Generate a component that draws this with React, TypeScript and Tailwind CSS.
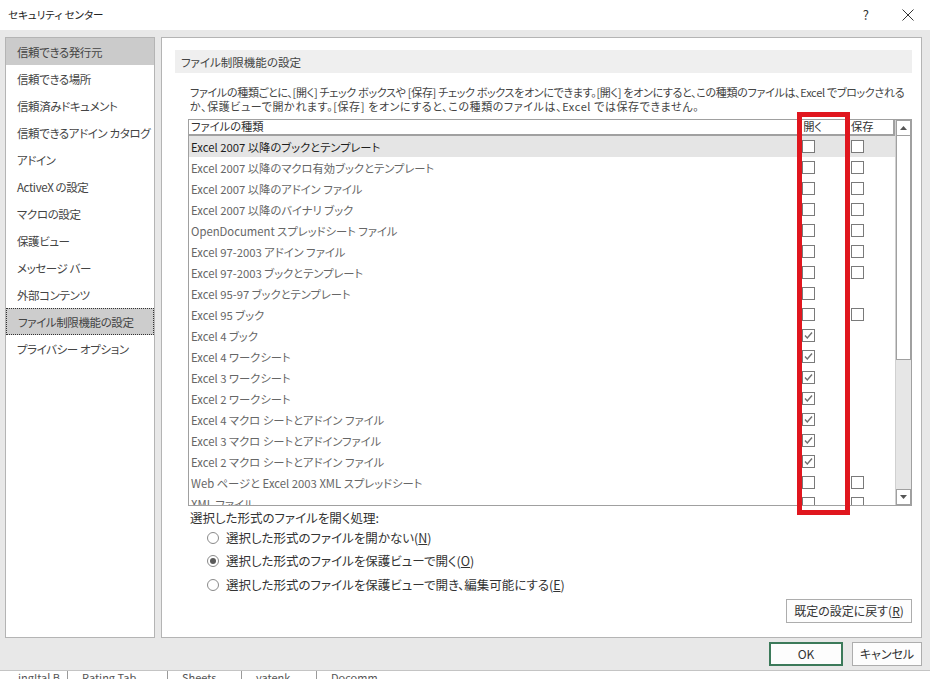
import React from 'react';

const navItems = [
  '信頼できる発行元',
  '信頼できる場所',
  '信頼済みドキュメント',
  '信頼できるアドイン カタログ',
  'アドイン',
  'ActiveX の設定',
  'マクロの設定',
  '保護ビュー',
  'メッセージ バー',
  '外部コンテンツ',
  'ファイル制限機能の設定',
  'プライバシー オプション',
];

type Row = { name: string; open: boolean; save: boolean | null };

const rows: Row[] = [
  { name: 'Excel 2007 以降のブックとテンプレート', open: false, save: false },
  { name: 'Excel 2007 以降のマクロ有効ブックとテンプレート', open: false, save: false },
  { name: 'Excel 2007 以降のアドイン ファイル', open: false, save: false },
  { name: 'Excel 2007 以降のバイナリ ブック', open: false, save: false },
  { name: 'OpenDocument スプレッドシート ファイル', open: false, save: false },
  { name: 'Excel 97-2003 アドイン ファイル', open: false, save: false },
  { name: 'Excel 97-2003 ブックとテンプレート', open: false, save: false },
  { name: 'Excel 95-97 ブックとテンプレート', open: false, save: null },
  { name: 'Excel 95 ブック', open: false, save: false },
  { name: 'Excel 4 ブック', open: true, save: null },
  { name: 'Excel 4 ワークシート', open: true, save: null },
  { name: 'Excel 3 ワークシート', open: true, save: null },
  { name: 'Excel 2 ワークシート', open: true, save: null },
  { name: 'Excel 4 マクロ シートとアドイン ファイル', open: true, save: null },
  { name: 'Excel 3 マクロ シートとアドインファイル', open: true, save: null },
  { name: 'Excel 2 マクロ シートとアドイン ファイル', open: true, save: null },
  { name: 'Web ページと Excel 2003 XML スプレッドシート', open: false, save: false },
  { name: 'XML ファイル', open: false, save: false },
];

function Checkbox({ checked }: { checked: boolean }) {
  return (
    <div className="w-[13px] h-[13px] border border-[#7a7a7a] bg-white flex items-center justify-center">
      {checked && (
        <svg width="11" height="11" viewBox="0 0 11 11">
          <path d="M2 5.5 L4.3 8 L9 2.5" fill="none" stroke="#707070" strokeWidth="1.4" />
        </svg>
      )}
    </div>
  );
}

function Radio({ checked, children }: { checked: boolean; children: React.ReactNode }) {
  return (
    <div className="h-[23.5px] flex items-center pl-[17px] gap-[7px]">
      <div className="w-[12px] h-[12px] rounded-full border border-[#8a8a8a] bg-white flex items-center justify-center">
        {checked && <div className="w-[6px] h-[6px] rounded-full bg-[#5a5a5a]" />}
      </div>
      <span className="text-[#333] whitespace-nowrap">{children}</span>
    </div>
  );
}

export default function App() {
  return (
    <div className="w-[930px] h-[679px] bg-[#e8e8e8] flex flex-col overflow-hidden font-['Noto_Sans_CJK_JP',sans-serif] [font-feature-settings:'palt'] text-[12px] leading-[14px]">
      {/* Title bar */}
      <div className="h-[30px] bg-white flex items-center justify-between pl-[8px] pr-[16px] shrink-0">
        <span className="text-[10.5px] text-[#222]">セキュリティ センター</span>
        <div className="flex items-center gap-[33px]">
          <span className="text-[13px] text-[#333]">?</span>
          <svg width="12" height="12" viewBox="0 0 12 12">
            <path d="M0.5 0.5 L11.5 11.5 M11.5 0.5 L0.5 11.5" stroke="#333" strokeWidth="1" />
          </svg>
        </div>
      </div>

      {/* Body */}
      <div className="h-[608px] shrink-0 flex gap-[6px] pl-[5px] pr-[8px] pt-[7px]">
        {/* Nav */}
        <div className="w-[150px] h-[601px] bg-white border border-[#b4b4b4] flex flex-col">
          {navItems.map((item, i) => (
            <div
              key={item}
              className={`h-[27px] shrink-0 flex items-center pl-[11px] text-[11.5px] tracking-[-0.4px] text-[#444] whitespace-nowrap ${
                i === 0 ? 'bg-[#cbcbcb]' : ''
              } ${i === 10 ? 'bg-[#cdcdcd] border border-dotted border-[#333] pl-[10px]' : ''}`}
            >
              {item}
            </div>
          ))}
        </div>

        {/* Main panel */}
        <div className="relative w-[761px] h-[601px] bg-white border border-[#b4b4b4] pl-[13px] pr-[9px] pt-[12px] flex flex-col">
          <div className="h-[23px] bg-[#efefef] flex items-center pl-[6px] text-[11.5px] text-[#444]">ファイル制限機能の設定</div>

          <div className="mt-[12px] pl-[15px] text-[11px] text-[#444] whitespace-nowrap">
            <div className="h-[14px] tracking-[-0.3px]">ファイルの種類ごとに、[開く] チェック ボックスや [保存] チェック ボックスをオンにできます。[開く] をオンにすると、この種類のファイルは、Excel でブロックされる</div>
            <div className="h-[14px] tracking-[0.6px]">か、保護ビューで開かれます。[保存] をオンにすると、この種類のファイルは、Excel では保存できません。</div>
          </div>

          {/* Table */}
          <div className="mt-[6px] ml-[13px] w-[724px] h-[387px] border border-[#a0a0a0] flex overflow-hidden">
            <div className="flex-1 flex flex-col overflow-hidden">
              <div className="h-[16px] shrink-0 flex bg-white text-[11.3px] leading-none text-[#333]">
                <div className="w-[611px] flex items-center border-b-2 border-r-2 border-[#a0a0a0] pl-[2px]">ファイルの種類</div>
                <div className="w-[49px] flex items-center border-b-2 border-r-2 border-l border-[#a0a0a0] pl-[3px]">開く</div>
                <div className="w-[47px] flex items-center border-b-2 border-r-2 border-l border-[#a0a0a0] pl-[2px]">保存</div>
              </div>
              {rows.map((r, i) => (
                <div key={r.name} className={`h-[21px] shrink-0 flex items-center ${i === 0 ? 'bg-[#e5e5e5]' : ''}`}>
                  <div className={`w-[611px] pl-[2px] text-[11.3px] whitespace-nowrap ${i === 0 ? 'text-[#1e1e1e]' : 'text-[#666]'}`}>{r.name}</div>
                  <div className="w-[49px] pl-[3px]">
                    <Checkbox checked={r.open} />
                  </div>
                  <div className="w-[47px] pl-[3px]">{r.save !== null && <Checkbox checked={r.save} />}</div>
                </div>
              ))}
            </div>
            {/* Scrollbar */}
            <div className="w-[16px] shrink-0 flex flex-col bg-[#e6e6e6] border-l border-[#d0d0d0]">
              <div className="h-[16px] bg-white border border-[#a0a0a0] flex items-center justify-center">
                <svg width="7" height="4" viewBox="0 0 7 4">
                  <path d="M0 4 L3.5 0 L7 4 Z" fill="#555" />
                </svg>
              </div>
              <div className="h-[224px] bg-white border border-[#a0a0a0] border-t-0" />
              <div className="flex-1" />
              <div className="h-[16px] bg-white border border-[#a0a0a0] flex items-center justify-center">
                <svg width="7" height="4" viewBox="0 0 7 4">
                  <path d="M0 0 L3.5 4 L7 0 Z" fill="#555" />
                </svg>
              </div>
            </div>
          </div>

          {/* Red highlight */}
          <div className="absolute left-[635px] top-[74px] w-[53px] h-[403px] border-[5px] border-[#e0161e] pointer-events-none" />

          {/* Radio group */}
          <div className="mt-[5px] pl-[15px] text-[12.5px] text-[#333]">選択した形式のファイルを開く処理:</div>
          <div className="pl-[15px] mt-[1px] text-[12.5px]">
            <Radio checked={false}>
              選択した形式のファイルを開かない(<span className="underline">N</span>)
            </Radio>
            <Radio checked={true}>
              選択した形式のファイルを保護ビューで開く(<span className="underline">O</span>)
            </Radio>
            <Radio checked={false}>
              選択した形式のファイルを保護ビューで開き、編集可能にする(<span className="underline">E</span>)
            </Radio>
          </div>

          <div className="flex justify-end mt-[2px]">
            <button className="w-[126px] h-[24px] border border-[#adadad] bg-[#fdfdfd] text-[#333] text-[12px]">
              既定の設定に戻す(<span className="underline">R</span>)
            </button>
          </div>
        </div>
      </div>

      {/* Footer */}
      <div className="h-[32px] shrink-0 flex justify-end items-start gap-[9px] pt-[4px] pr-[8px]">
        <button className="w-[74px] h-[24px] border-2 border-[#3c7a5a] bg-[#fdfdfd] text-[#333] text-[12px]">OK</button>
        <button className="w-[70px] h-[24px] border border-[#adadad] bg-[#fdfdfd] text-[#333] text-[12px]">キャンセル</button>
      </div>

      {/* Background sheet tabs peeking */}
      <div className="flex-1 bg-white border-t border-[#c4c4c4] flex text-[11px] text-[#555] overflow-hidden leading-[10px]">
        <div className="w-[68px] border-r border-[#9a9a9a] pt-[1px] pl-[18px]">ingItal B</div>
        <div className="w-[100px] border-r border-[#9a9a9a] pt-[1px] pl-[14px]">Rating Tab</div>
        <div className="w-[74px] border-r border-[#9a9a9a] pt-[1px] pl-[14px]">Sheets</div>
        <div className="w-[75px] border-r border-[#9a9a9a] pt-[1px] pl-[14px]">yatenk</div>
        <div className="w-[120px] pt-[1px] pl-[14px]">Docomm</div>
      </div>
    </div>
  );
}
